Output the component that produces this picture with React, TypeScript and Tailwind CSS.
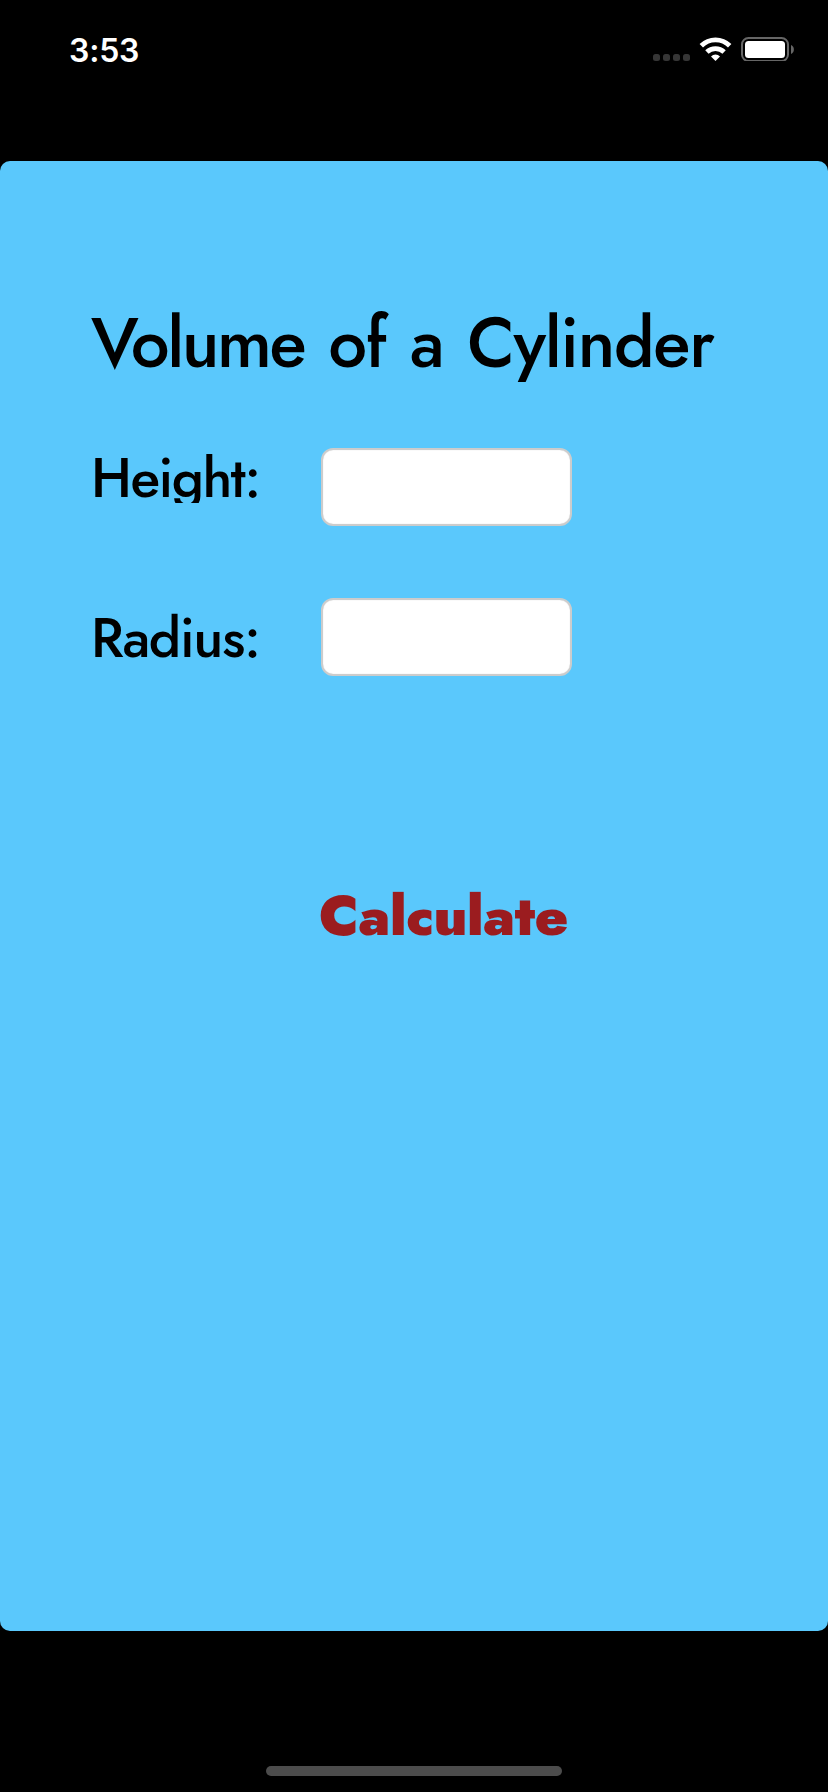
function StatusBar() {
  return (
    <header className="flex h-[161px] shrink-0 justify-between pl-[69px] pr-[33px] pt-[31px]">
      <time className="h-10 font-['Inter',sans-serif] text-[32px] font-semibold leading-10 tracking-[-0.2px] text-white">
        3:53
      </time>
      <svg className="mt-[6px] h-6 w-[142px]" viewBox="653 37 142 24" aria-hidden="true">
        <g fill="#363636">
          <rect x="653" y="54" width="7" height="7" rx="2.5" />
          <rect x="663" y="54" width="7" height="7" rx="2.5" />
          <rect x="673" y="54" width="7" height="7" rx="2.5" />
          <rect x="683" y="54" width="7" height="7" rx="2.5" />
        </g>
        <g fill="none" stroke="#fff" strokeWidth="4.8">
          <path d="M701.3 45.8 A20 20 0 0 1 729.7 45.8" />
          <path d="M706.9 52 A12.4 12.4 0 0 1 724.1 52" />
        </g>
        <path d="M715.5 61 L711 56.4 A6.4 6.4 0 0 1 720 56.4 Z" fill="#fff" />
        <rect x="742" y="38" width="46" height="23" rx="6.5" fill="none" stroke="#666" strokeWidth="2" />
        <rect x="745" y="41" width="40" height="17" rx="3.5" fill="#fff" />
        <path d="M791 45 C794.8 46.5 794.8 52.5 791 54 Z" fill="#666" />
      </svg>
    </header>
  );
}

function Field({ label, labelClass }: { label: string; labelClass: string }) {
  return (
    <div className="flex h-[78px]">
      <label className={`w-[230px] shrink-0 text-[55px] font-medium leading-[60px] ${labelClass}`}>
        {label}
      </label>
      <input
        aria-label={label}
        className="h-[78px] w-[251px] rounded-xl border-2 border-[#cccccc] bg-white shadow-[inset_0_0_1px_#cccccc]"
      />
    </div>
  );
}

export default function App() {
  return (
    <main className="flex h-[1792px] w-[828px] flex-col bg-black">
      <StatusBar />
      <section className="flex h-[1470px] flex-col items-start rounded-[10px] bg-[#5ac8fc] pl-[91px] pt-[142px] font-['Futura','Jost','Lato',sans-serif] text-black">
        <h1 className="h-[80px] whitespace-nowrap text-[69px] font-medium leading-[80px] tracking-[-1.3px] [word-spacing:4.5px]">
          <span className="tracking-[-2.4px]">Volume</span> of a Cylinder
        </h1>
        <div className="mt-[65px] flex flex-col gap-[72px]">
          <Field label="Height:" labelClass="h-[55px] overflow-hidden tracking-[-1.5px]" />
          <Field label="Radius:" labelClass="mt-[10px] h-[68px] tracking-[-1.3px]" />
        </div>
        <button className="ml-[228px] mt-[205px] h-[70px] whitespace-nowrap text-[56px] font-black leading-[70px] tracking-[-0.5px] text-[#9b1c1f]">
          Calculate
        </button>
      </section>
      <div className="ml-[266px] mt-[135px] h-[10px] w-[296px] shrink-0 rounded-full bg-[#4c4c4c]" />
    </main>
  );
}
